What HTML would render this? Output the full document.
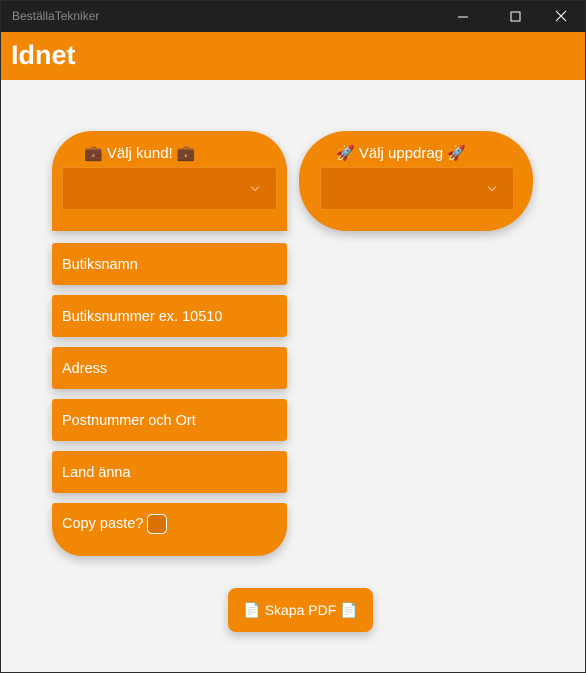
<!DOCTYPE html>
<html><head><meta charset="utf-8"><style>
*{box-sizing:border-box;margin:0;padding:0}
body{width:586px;height:673px;background:#2b2b2b;font-family:"Segoe UI","Liberation Sans","Noto Sans CJK JP",sans-serif;position:relative;overflow:hidden}
.win{position:absolute;left:1px;top:1px;width:584px;height:671px;background:#f3f3f3}
.tb{position:absolute;left:0;top:0;width:584px;height:31px;background:#202020;color:#8a8a8a;font-size:12px;line-height:31px;padding-left:11px}
.hd{position:absolute;left:0;top:31px;width:584px;height:48px;background:#f28705;color:#fff;font-weight:bold;font-size:27px;line-height:46px;padding-left:10px}
.o{position:absolute;background:#f28705;color:#fff;box-shadow:0 4px 10px rgba(0,0,0,.22)}
.dd{position:absolute;background:#df7100;border:1px solid #f08c1c;border-radius:3px;height:43px;top:36px}
.dd:after{content:"";position:absolute;right:18px;top:16px;width:5px;height:5px;border-right:1px solid #f6c89a;border-bottom:1px solid #f6c89a;transform:rotate(45deg)}
.t{font-size:15px;position:absolute;top:13px}
.f{left:51px;width:235px;height:42px;border-radius:3px;font-size:14.5px;line-height:45px;padding-left:10px}
</style></head><body>
<div class="win">
<div class="tb">BeställaTekniker
<svg style="position:absolute;left:456px;top:10px" width="12" height="12"><line x1="1" y1="6" x2="11" y2="6" stroke="#fff"/></svg>
<svg style="position:absolute;left:509px;top:10px" width="12" height="12"><rect x="1" y="1" width="9" height="9" fill="none" stroke="#fff"/></svg>
<svg style="position:absolute;left:554px;top:9px" width="12" height="12"><path d="M1 1L11 11M11 1L1 11" stroke="#fff"/></svg>
</div>
<div class="hd">Idnet</div>
<div class="o" style="left:51px;top:130px;width:235px;height:100px;border-radius:40px 40px 0 0">
<div class="t" style="left:32px">💼 Välj kund! 💼</div>
<div class="dd" style="left:10px;width:215px"></div></div>
<div class="o" style="left:298px;top:130px;width:234px;height:100px;border-radius:48px">
<div class="t" style="left:37px">🚀 Välj uppdrag 🚀</div>
<div class="dd" style="left:21px;width:194px"></div></div>
<div class="o f" style="top:242px">Butiksnamn</div>
<div class="o f" style="top:294px">Butiksnummer ex. 10510</div>
<div class="o f" style="top:346px">Adress</div>
<div class="o f" style="top:398px">Postnummer och Ort</div>
<div class="o f" style="top:450px">Land änna</div>
<div class="o f" style="top:502px;height:53px;border-radius:3px 3px 30px 30px;line-height:42px">Copy paste?<span style="display:inline-block;width:20px;height:20px;border:1px solid #fff;border-radius:5px;background:#d97200;vertical-align:middle;margin-left:4px"></span></div>
<div class="o" style="left:227px;top:587px;width:145px;height:44px;border-radius:8px;font-size:14px;line-height:45px;text-align:center">📄 Skapa PDF 📄</div>
</div>
</body></html>
